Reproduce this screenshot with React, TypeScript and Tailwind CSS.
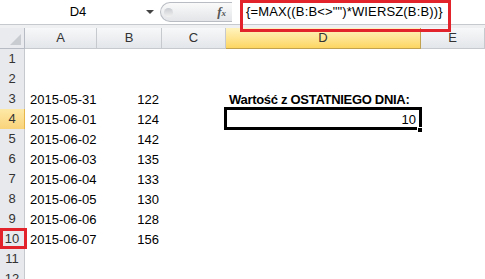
import React from 'react';

const colWidths = 'grid-cols-[25px_72px_65px_64px_195px_64px]';
const letters = ['A', 'B', 'C', 'D', 'E'];

type Row = { n: number; a?: string; b?: string; d?: React.ReactNode };

const rows: Row[] = [
    { n: 1 },
    { n: 2 },
    { n: 3, a: '2015-05-31', b: '122', d: 'title' },
    { n: 4, a: '2015-06-01', b: '124', d: 'value' },
    { n: 5, a: '2015-06-02', b: '142' },
    { n: 6, a: '2015-06-03', b: '135' },
    { n: 7, a: '2015-06-04', b: '133' },
    { n: 8, a: '2015-06-05', b: '130' },
    { n: 9, a: '2015-06-06', b: '128' },
    { n: 10, a: '2015-06-07', b: '156' },
    { n: 11 },
    { n: 12 },
];

function FormulaBar() {
    return (
        <div className="relative flex h-[25px] border-b border-[#c6c9ce] bg-white">
            {/* name box */}
            <div className="flex w-[156px] items-center bg-white">
                <span className="flex-1 pl-[10px] text-center text-[13px] text-black">D4</span>
                <span className="mr-[2px] h-0 w-0 border-x-[4px] border-t-[4px] border-x-transparent border-t-[#444]" />
            </div>
            {/* splitter + fx */}
            <div className="flex w-[84px] items-center bg-white">
                <div className="ml-[4px] flex h-[20px] w-[72px] items-center rounded-l-full border border-r-0 border-[#b9bdc3] bg-gradient-to-b from-[#fafafa] to-[#e3e5e8]">
                    <span className="ml-[3px] h-[9px] w-[9px] rounded-full bg-gradient-to-b from-[#c8cbd0] to-[#f2f2f2]" />
                    <span className="ml-auto mr-[6px] font-['Liberation_Serif',serif] text-[13px] font-bold italic text-[#555]">
                        f<span className="text-[9px]">x</span>
                    </span>
                </div>
            </div>
            {/* formula */}
            <div className="flex flex-1 items-center pl-[6px] text-[13px] tracking-[0.15px] text-black">
                {'{=MAX((B:B<>"")*WIERSZ(B:B))}'}
            </div>
            <div className="pointer-events-none absolute left-[240px] top-0 h-[32px] w-[211px] border-[3px] border-[#e2232b]" />
        </div>
    );
}

function HeaderRow() {
    return (
        <div className={`grid ${colWidths} h-[21px]`}>
            <div className="relative border-b border-r border-[#b7bcc4] bg-[#e9ebee]">
                <span className="absolute bottom-[3px] right-[3px] h-0 w-0 border-b-[11px] border-l-[11px] border-l-transparent border-b-[#c9ccd1]" />
            </div>
            {letters.map((l) => (
                <div
                    key={l}
                    className={
                        l === 'D'
                            ? 'flex items-center justify-center border-b border-r border-[#c2a24f] bg-gradient-to-b from-[#fff3bd] to-[#fdd660] text-[13px] text-[#333]'
                            : 'flex items-center justify-center border-b border-r border-[#c6c9ce] bg-gradient-to-b from-[#f7f8f9] to-[#e3e6ea] text-[13px] text-[#333]'
                    }
                >
                    {l}
                </div>
            ))}
        </div>
    );
}

function SheetRow({ row }: { row: Row }) {
    const selected = row.n === 4;
    return (
        <div className={`grid ${colWidths} h-[20px]`}>
            <div
                className={
                    selected
                        ? 'relative flex items-center justify-center border-b border-r border-[#e6b64a] bg-gradient-to-b from-[#fde9a6] to-[#f9d37a] text-[13px] text-[#333]'
                        : 'relative flex items-center justify-center border-b border-r border-[#c6c9ce] bg-[#e7e9ed] text-[13px] text-[#333]'
                }
            >
                {row.n}
                {row.n === 10 && (
                    <span className="pointer-events-none absolute -top-[1px] left-0 h-[21px] w-[27px] border-[3px] border-[#e2232b]" />
                )}
            </div>
            <div className="flex items-center pl-[5px] text-[13px] text-black">{row.a}</div>
            <div className="flex items-center justify-end pr-[3px] text-[13px] text-black">{row.b}</div>
            <div />
            <div className="relative flex items-center text-[13px] text-black">
                {row.d === 'title' && (
                    <span className="pl-[3px] font-bold tracking-[-0.3px]">Wartość z OSTATNIEGO DNIA:</span>
                )}
                {row.d === 'value' && (
                    <>
                        <span className="ml-auto pr-[5px]">10</span>
                        <span className="pointer-events-none absolute -left-[2px] -top-[2px] h-[23px] w-[198px] border-[3px] border-black" />
                        <span className="pointer-events-none absolute -bottom-[3px] -right-[2px] h-[6px] w-[6px] border border-white bg-black" />
                    </>
                )}
            </div>
            <div />
        </div>
    );
}

export default function App() {
    return (
        <div className="relative h-[279px] w-[485px] overflow-hidden bg-white font-['Liberation_Sans',Arial,sans-serif]">
            <FormulaBar />
            <div className="h-[3px] bg-[#eef0f2]" />
            <HeaderRow />
            {rows.map((row) => (
                <SheetRow key={row.n} row={row} />
            ))}
        </div>
    );
}
